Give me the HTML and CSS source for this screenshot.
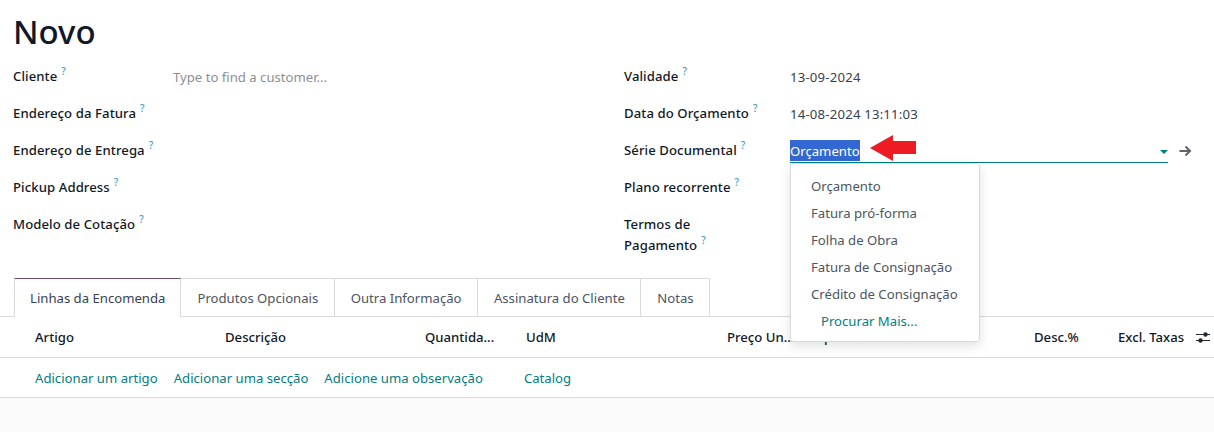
FILE: index.html
```html
<!DOCTYPE html>
<html lang="pt">
<head>
    <meta charset="UTF-8">
    <meta name="viewport" content="width=device-width, initial-scale=1.0">
    <title>Novo</title>
    <link rel="stylesheet" href="styles.css">
</head>
<body>
    <div class="sheet">
        <h1 class="title">Novo</h1>
        <div class="form-columns">
            <div class="form-col">
                <div class="field"><label>Cliente<sup>?</sup></label><span class="placeholder">Type to find a customer...</span></div>
                <div class="field"><label>Endereço da Fatura<sup>?</sup></label></div>
                <div class="field"><label>Endereço de Entrega<sup>?</sup></label></div>
                <div class="field"><label>Pickup Address<sup>?</sup></label></div>
                <div class="field"><label>Modelo de Cotação<sup>?</sup></label></div>
            </div>
            <div class="form-col form-col-right">
                <div class="field"><label>Validade<sup>?</sup></label><span class="value">13-09-2024</span></div>
                <div class="field"><label>Data do Orçamento<sup>?</sup></label><span class="value">14-08-2024 13:11:03</span></div>
                <div class="field">
                    <label>Série Documental<sup>?</sup></label>
                    <div class="select-wrap">
                        <div class="select-input">
                            <span class="selected">Orçamento</span>
                            <svg class="red-arrow" width="47" height="26" viewBox="0 0 47 26"><path d="M0 13 L23 0 L23 6 L46 6 L46 19 L23 19 L23 26 Z" fill="#ed1c24"/></svg>
                            <span class="caret"></span>
                        </div>
                        <svg class="go-arrow" width="13" height="12" viewBox="0 0 13 12"><path d="M0.5 6 H11 M6.5 1.5 L11 6 L6.5 10.5" fill="none" stroke="#5f636f" stroke-width="2"/></svg>
                        <ul class="dropdown">
                            <li>Orçamento</li>
                            <li>Fatura pró-forma</li>
                            <li>Folha de Obra</li>
                            <li>Fatura de Consignação</li>
                            <li>Crédito de Consignação</li>
                            <li class="more">Procurar Mais...</li>
                        </ul>
                    </div>
                </div>
                <div class="field"><label>Plano recorrente<sup>?</sup></label></div>
                <div class="field field-tall"><label>Termos de Pagamento<sup>?</sup></label></div>
            </div>
        </div>

        <div class="tabs">
            <a class="tab active">Linhas da Encomenda</a>
            <a class="tab">Produtos Opcionais</a>
            <a class="tab">Outra Informação</a>
            <a class="tab">Assinatura do Cliente</a>
            <a class="tab">Notas</a>
        </div>

        <div class="lines-head">
            <span>Artigo</span>
            <span>Descrição</span>
            <span>Quantida...</span>
            <span>UdM</span>
            <span>Preço Un...</span>
            <span>Imp</span>
            <span>Desc.%</span>
            <span>Excl. Taxas</span>
            <svg class="col-opts" width="14" height="11" viewBox="0 0 14 11"><path d="M0 2.5 H14 M0 8.5 H14" stroke="#22262e" stroke-width="1.2"/><circle cx="9.5" cy="2.5" r="2.2" fill="#22262e"/><circle cx="4.5" cy="8.5" r="2.2" fill="#22262e"/></svg>
        </div>
        <div class="lines-add">
            <a>Adicionar um artigo</a>
            <a>Adicionar uma secção</a>
            <a>Adicione uma observação</a>
            <a class="catalog">Catalog</a>
        </div>
        <div class="footer-area"></div>
    </div>
</body>
</html>
```

FILE: styles.css
```css
html, body {
    margin: 0;
    padding: 0;
    height: 100%;
    overflow: hidden;
}
body {
    font-family: "Noto Sans", "Open Sans", Arial, sans-serif;
    font-size: 13.15px;
    color: #374151;
    background-color: #fff;
}
.sheet {
    display: flex;
    flex-direction: column;
    height: 432px;
}
.title {
    margin: 0;
    padding: 12px 13px 0;
    font-size: 33px;
    line-height: 40px;
    font-weight: 500;
    color: #111827;
}
.form-columns {
    display: grid;
    grid-template-columns: 611px 1fr;
    height: 226px;
    padding-top: 13px;
    box-sizing: border-box;
}
.form-col {
    padding-left: 13px;
}
.field {
    display: flex;
    height: 37px;
    align-items: flex-start;
}
.field-tall {
    height: 44px;
}
label {
    width: 160px;
    flex-shrink: 0;
    font-weight: 500;
    line-height: 22px;
    letter-spacing: 0.08px;
    color: #111827;
}
.form-col-right label {
    width: 166px;
}
.field-tall label {
    width: 110px;
    margin-top: 1px;
    line-height: 21px;
}
sup {
    margin-left: 4px;
    font-size: 10px;
    line-height: 0;
    color: #3f9fc9;
    vertical-align: 6px;
}
.placeholder {
    color: #8b8f98;
    line-height: 24px;
}
.value {
    line-height: 24px;
    letter-spacing: 0.2px;
    color: #374151;
}
.select-wrap {
    position: relative;
    width: 378px;
}
.select-input {
    position: relative;
    display: flex;
    align-items: flex-start;
    width: 378px;
    height: 23px;
    border-bottom: 1px solid #017e84;
}
.selected {
    background-color: #3367d1;
    color: #fff;
    line-height: 23px;
    height: 21px;
    margin-top: 1px;
}
.red-arrow {
    position: absolute;
    left: 80px;
    top: -4px;
}
.caret {
    position: absolute;
    right: 0;
    top: 11px;
    border-left: 4px solid transparent;
    border-right: 4px solid transparent;
    border-top: 4px solid #017e84;
}
.go-arrow {
    position: absolute;
    left: 389px;
    top: 6px;
}
.dropdown {
    position: absolute;
    left: 0;
    top: 24px;
    z-index: 5;
    width: 190px;
    height: 179px;
    box-sizing: border-box;
    margin: 0;
    padding: 9px 0 0;
    list-style: none;
    background-color: #fff;
    border: 1px solid #d8dadd;
    border-radius: 3px;
    box-shadow: 0 4px 12px rgba(0, 0, 0, 0.12);
}
.dropdown li {
    height: 27px;
    line-height: 27px;
    padding-left: 20px;
    color: #4b5563;
    white-space: nowrap;
}
.dropdown .more {
    padding-left: 30px;
    color: #017e84;
}
.tabs {
    display: flex;
    height: 39px;
    padding-left: 14px;
    box-sizing: border-box;
    border-bottom: 1px solid #d8dadd;
}
.tab {
    display: block;
    height: 38px;
    line-height: 38px;
    box-sizing: border-box;
    padding: 0 15.4px 0 16px;
    border-top: 1px solid #d8dadd;
    border-right: 1px solid #d8dadd;
    color: #4b5563;
    white-space: nowrap;
}
.tab.active {
    height: 39px;
    padding: 0 15px;
    background-color: #fff;
    color: #374151;
    border-top-color: #714b67;
    border-left: 1px solid #d8dadd;
}
.lines-head {
    display: grid;
    grid-template-columns: 190px 200px 101px 201px 80px 227px 84px 78px 1fr;
    height: 41px;
    box-sizing: border-box;
    padding-left: 35px;
    align-items: center;
    border-bottom: 1px solid #d8dadd;
    font-weight: 500;
    color: #111827;
    white-space: nowrap;
}
.lines-add {
    display: flex;
    height: 40px;
    box-sizing: border-box;
    padding-left: 35px;
    align-items: center;
    gap: 16px;
    border-bottom: 1px solid #d8dadd;
    color: #017e84;
    white-space: nowrap;
}
.catalog {
    margin-left: 25px;
}
.footer-area {
    flex: 1;
    background-color: #fafafa;
}
```
